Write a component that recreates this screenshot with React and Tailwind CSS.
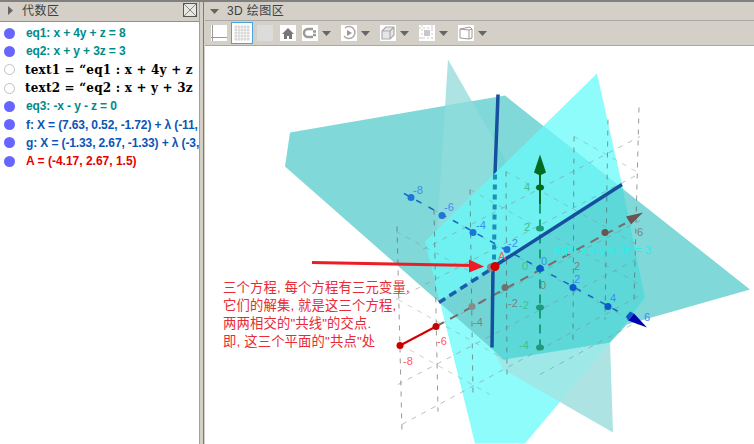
import React from 'react'

const CJK = '"Liberation Sans", "Noto Sans CJK SC", sans-serif'

const rows = [
    { text: 'eq1: x + 4y + z = 8', color: 'text-[#008b8b]', on: true },
    { text: 'eq2: x + y + 3z = 3', color: 'text-[#008b8b]', on: true },
    { text: 'text1 = “eq1 : x + 4y + z', math: true },
    { text: 'text2 = “eq2 : x + y + 3z', math: true },
    { text: 'eq3: -x - y - z = 0', color: 'text-[#008b8b]', on: true },
    { text: 'f: X = (7.63, 0.52, -1.72) + λ (-11,', color: 'text-[#0a55b5]', on: true },
    { text: 'g: X = (-1.33, 2.67, -1.33) + λ (-3,', color: 'text-[#0a55b5]', on: true },
    { text: 'A = (-4.17, 2.67, 1.5)', color: 'text-[#e60000] tracking-normal', on: true },
]

const plane1 = '290,133 505,96 750,290 627,325 610,343 503,360 493,350 285,167'
const plane2 = '448,60 610,343 613,433 503,370 493,350 437,235'
const plane3 = '597,74 622,185 645,298 625,325 610,343 525,444 475,444 425,242'

const verticals = [
    [397, 227, 402, 432], [434, 210, 438, 412], [470, 190, 473, 395], [506, 172, 507, 375],
    [574, 137, 573, 340], [608, 120, 605, 320], [639, 108, 634, 300],
]

const risers = [
    [423, 250, 640, 137], [396, 300, 640, 174], [402, 345, 640, 221], [398, 385, 640, 258],
    [402, 425, 640, 296], [540, 375, 638, 322],
]

const fallers = [
    [396, 232, 470, 272], [433, 210, 640, 326], [470, 190, 640, 285], [506, 172, 640, 247],
    [574, 137, 640, 174], [398, 300, 505, 360], [400, 345, 490, 395],
]

const blueDots = [[411, 198], [442, 216], [473, 233], [507, 250], [540, 269], [573, 288], [608, 307]]
const blueLabels = [['-8', 418, 194], ['-6', 449, 211], ['-4', 481, 229], ['-2', 513, 247], ['0', 544, 265], ['2', 577, 283], ['4', 613, 302], ['6', 647, 321]]
const greenDots = [[540, 188, '#006a1f'], [540, 229, '#1c9c78'], [540, 269, '#148c78'], [540, 308, '#1c9c78'], [540, 348, '#1c9c78']]
const greenLabels = [['4', 527, 191], ['2', 527, 231], ['0', 525, 270], ['-2', 524, 309], ['-4', 524, 349]]
const greyLabels = [['-4', 478, 326], ['-2', 513, 307], ['0', 543, 289], ['2', 577, 270], ['6', 640, 236]]

const ToolIcon = ({ children }) => (
    <div className="w-4 h-4 bg-white flex items-center justify-center">
        <svg width="16" height="16" viewBox="0 0 16 16">{children}</svg>
    </div>
)

const Caret = () => (
    <svg width="9" height="5" viewBox="0 0 9 5" className="ml-1 mr-[10px]"><path d="M0 0h9L4.500 5z" fill="#666" /></svg>
)

function Scene() {
    return (
        <svg className="w-full h-full block" viewBox="205 47 549 397">
            <defs>
                <clipPath id="clip1"><polygon points={plane1} /></clipPath>
                <clipPath id="clip2"><polygon points={plane2} /></clipPath>
                <clipPath id="clip3"><polygon points={plane3} /></clipPath>
            </defs>

            {/* planes, each overlap has its own flat colour */}
            <polygon points={plane2} fill="#aee3e3" />
            <polygon points={plane3} fill="#8ffcfc" />
            <polygon points={plane2} fill="#9fe8e8" clipPath="url(#clip3)" />
            <polygon points={plane1} fill="#80d8d8" />
            <g clipPath="url(#clip1)">
                <polygon points={plane2} fill="#8cdcdc" />
                <polygon points="498,90 640,200 640,330 498,330" fill="#74d6d6" clipPath="url(#clip2)" />
            </g>
            <line x1="498" y1="95" x2="495" y2="175" stroke="#164f9e" strokeWidth="3.500" />
            <g clipPath="url(#clip3)">
                <polygon points={plane1} fill="#6ff1f1" />
                <g clipPath="url(#clip1)">
                    <polygon points="622,185 493,267 492,360 650,360 650,185" fill="#5dd8d8" />
                    <polygon points="438,303 493,267 492,352 470,340" fill="#72d4d4" />
                </g>
            </g>

            <g strokeWidth="1" strokeDasharray="5 6" fill="none">
                {verticals.map((l, i) => <line key={i} x1={l[0]} y1={l[1]} x2={l[2]} y2={l[3]} stroke="#555" strokeOpacity="0.6" />)}
                {risers.map((l, i) => <line key={i} x1={l[0]} y1={l[1]} x2={l[2]} y2={l[3]} stroke="#888" strokeOpacity="0.55" />)}
                {fallers.map((l, i) => <line key={i} x1={l[0]} y1={l[1]} x2={l[2]} y2={l[3]} stroke="#888" strokeOpacity="0.4" />)}
            </g>

            {/* y axis */}
            <line x1="436" y1="327" x2="625" y2="224" stroke="#7a6c6c" strokeWidth="2" strokeDasharray="9 7" />
            <line x1="400" y1="346" x2="436" y2="327" stroke="#d40000" strokeWidth="2" />
            <circle cx="400" cy="346" r="3.500" fill="#c80000" />
            <circle cx="436" cy="327" r="3.500" fill="#c80000" />
            <circle cx="472" cy="307" r="3.500" fill="#8a8a8a" />
            <circle cx="505" cy="288" r="3.500" fill="#6f7070" />
            <circle cx="605" cy="233" r="3.500" fill="#6a5555" />
            <polygon points="643,213 626,217 631,225" fill="#6a5555" />

            {/* green axis */}
            <line x1="540" y1="175" x2="540" y2="205" stroke="#006a1f" strokeWidth="2" />
            <line x1="540" y1="205" x2="540" y2="355" stroke="#1c9c78" strokeWidth="2" strokeDasharray="9 6" />
            <polygon points="540,155 546,173 540,176 534,173" fill="#006a1f" />
            {greenDots.map((d, i) => <ellipse key={i} cx={d[0]} cy={d[1]} rx="4" ry="3" fill={d[2]} />)}
            {greenLabels.map((t, i) => <text key={i} x={t[1]} y={t[2]} fontSize="11" fill="#3fc08c" textAnchor="middle" fontFamily="Liberation Sans">{t[0]}</text>)}

            {/* blue axis */}
            <line x1="404" y1="194" x2="620" y2="313" stroke="#1565c8" strokeWidth="1.500" strokeDasharray="6 8" />
            {blueDots.map((d, i) => <circle key={i} cx={d[0]} cy={d[1]} r="3.500" fill={i > 3 ? '#0a5ac8' : '#1e74d8'} />)}
            <polygon points="647,328 628,321 634,314" fill="#0000b0" />
            <polygon points="628,321 634,314 630,312 626,317" fill="#0a5ac8" />
            {blueLabels.map((t, i) => <text key={i} x={t[1]} y={t[2]} fontSize="11" fill="#3c8cf0" textAnchor="middle" fontFamily="Liberation Sans">{t[0]}</text>)}

            {greyLabels.map((t, i) => <text key={i} x={t[1]} y={t[2]} fontSize="11" fill="#808080" textAnchor="middle" fontFamily="Liberation Sans">{t[0]}</text>)}
            <text x="408" y="365" fontSize="11" fill="#ff5a5a" textAnchor="middle" fontFamily="Liberation Sans">-8</text>
            <text x="442" y="345" fontSize="11" fill="#ff5a5a" textAnchor="middle" fontFamily="Liberation Sans">-6</text>
            <text x="555" y="254" fontSize="11" fill="#22f0f0" fontFamily="Liberation Sans" letterSpacing="0.3">eq2: x + y + 3z = 3</text>

            {/* intersection lines */}
            <line x1="495" y1="175" x2="494" y2="262" stroke="#1a8fb8" strokeWidth="4" strokeDasharray="5 5" />
            <line x1="493" y1="268" x2="492" y2="348" stroke="#164f9e" strokeWidth="3.500" />
            <line x1="622" y1="185" x2="497" y2="265" stroke="#164f9e" strokeWidth="3.500" />
            <line x1="489" y1="271" x2="439" y2="303" stroke="#1a5fae" strokeWidth="3.500" strokeDasharray="8 5" />

            {/* red arrow and point */}
            <line x1="312" y1="263" x2="473" y2="266" stroke="#ee1c25" strokeWidth="3" />
            <polygon points="484,267 469,260 469,273" fill="#ee1c25" />
            <circle cx="491" cy="268" r="4" fill="#8a8a8a" />
            <circle cx="495" cy="267" r="4.500" fill="#d40000" />
            <text x="502" y="260" fontSize="11" fill="#ff5a5a" textAnchor="middle" fontFamily="Liberation Sans">A</text>
        </svg>
    )
}

export default function App() {
    return (
        <div className="w-[754px] h-[444px] flex overflow-hidden bg-[#d4d0c8] border-t-2 border-[#808080]" style={{ fontFamily: CJK }}>
            {/* algebra view */}
            <div className="w-[204px] h-full flex border-r border-[#7a7a7a]">
                <div className="w-[200px] flex flex-col bg-white border-r border-[#a0a0a0]">
                    <div className="h-[20px] bg-[#d4d0c8] border-b border-[#909090] flex items-start pl-2 shrink-0">
                        <svg width="5" height="9" viewBox="0 0 5 9" className="mt-[4px]"><path d="M0 0l5 4.500L0 9z" fill="#666" /></svg>
                        <span className="ml-[9px] text-[12px] leading-[18px] text-[#404040] tracking-[0.5px]">代数区</span>
                        <div className="ml-auto mr-[2px] mt-[1px] w-[14px] h-[14px] border border-[#555] bg-[#e8e6e0] flex items-center justify-center">
                            <svg width="12" height="12" viewBox="0 0 12 12"><path d="M0 0l12 12M12 0L0 12" stroke="#888" /></svg>
                        </div>
                    </div>
                    <div className="flex flex-col pt-[2px] overflow-hidden">
                        {rows.map((row, i) => (
                            <div key={i} className="h-[18.300px] flex items-center pl-[4px] whitespace-nowrap overflow-hidden">
                                {row.on
                                    ? <span className="w-[11px] h-[11px] rounded-full bg-[#6666ff] shrink-0" />
                                    : <span className="w-[11px] h-[11px] rounded-full bg-white border border-[#c0c0c0] shrink-0" />}
                                {row.math
                                    ? <span className="ml-[10px] text-[12px] font-bold text-black tracking-[0.2px]" style={{ fontFamily: '"DejaVu Serif", serif' }}>{row.text}</span>
                                    : <span className={`ml-[11px] text-[12px] font-bold tracking-[-0.12px] ${row.color}`}>{row.text}</span>}
                            </div>
                        ))}
                    </div>
                </div>
            </div>

            {/* 3D view */}
            <div className="flex-1 flex flex-col min-w-0 ml-[1px]">
                <div className="h-[19px] bg-[#d4d0c8] border-b border-[#a8a8a8] flex items-center pl-[5px] shrink-0">
                    <svg width="9" height="5" viewBox="0 0 9 5"><path d="M0 0h9L4.500 5z" fill="#666" /></svg>
                    <span className="ml-[8px] text-[12px] text-[#404040] tracking-[0.4px]">3D 绘图区</span>
                </div>
                <div className="h-[25px] bg-[#d4d0c8] border-b border-[#a8a8a8] flex items-center pl-[6px] shrink-0">
                    <ToolIcon><path d="M0 12.500h16M1.500 0v16" stroke="#999" fill="none" /></ToolIcon>
                    <div className="ml-[4px] w-[22px] h-[22px] border border-[#4aa3dc] bg-white flex items-center justify-center">
                        <svg width="16" height="16" viewBox="0 0 16 16">
                            <path d="M2 0v16M5 0v16M8 0v16M11 0v16M14 0v16M0 2h16M0 5h16M0 8h16M0 11h16M0 14h16" stroke="#d0d0d0" fill="none" />
                        </svg>
                    </div>
                    <div className="ml-[4px] w-4 h-4 bg-[#dcdcdc]" />
                    <div className="ml-[7px]">
                        <ToolIcon><path d="M8 3L2 9h2v5h3v-3h2v3h3V9h2z" fill="#777" /></ToolIcon>
                    </div>
                    <div className="ml-[6px] flex items-center">
                        <ToolIcon><path d="M11 4H6a4 4 0 0 0 0 8h5M11 6.500h3M11 10h3" stroke="#9a9a9a" strokeWidth="2.500" fill="none" /></ToolIcon>
                        <Caret />
                    </div>
                    <div className="flex items-center">
                        <ToolIcon><path d="M4 3a6 6 0 1 1-1 8" stroke="#aaa" strokeWidth="1.500" fill="none" /><path d="M6 5l5 3-5 3z" fill="#999" /></ToolIcon>
                        <Caret />
                    </div>
                    <div className="flex items-center">
                        <ToolIcon><path d="M2 6l4-4h8v8l-4 4H2zM2 6h8v8M10 6l4-4" stroke="#aaa" strokeWidth="1.200" fill="#e6e6e6" /></ToolIcon>
                        <Caret />
                    </div>
                    <div className="flex items-center">
                        <ToolIcon><path d="M5 5h6v6H5z" fill="#c8c8c8" /><path d="M0 3h16M0 13h16M3 0v16M13 0v16" stroke="#ccc" strokeDasharray="2 2" fill="none" /></ToolIcon>
                        <Caret />
                    </div>
                    <div className="flex items-center">
                        <ToolIcon><path d="M2 4l10-2 2 2v9l-3 1-9-1zM2 4l9 1v9M11 5l3-1" stroke="#999" fill="none" /></ToolIcon>
                        <Caret />
                    </div>
                </div>
                <div className="flex-1 min-h-0 bg-white relative">
                    <Scene />
                    <div className="absolute left-[18px] top-[233px] text-[13.330px] leading-[18px] tracking-[0.15px] text-[#ea2a34] whitespace-nowrap">
                        <div>三个方程, 每个方程有三元变量,</div>
                        <div>它们的解集, 就是这三个方程,</div>
                        <div>两两相交的"共线"的交点.</div>
                        <div>即, 这三个平面的"共点"处</div>
                    </div>
                </div>
            </div>
        </div>
    )
}
